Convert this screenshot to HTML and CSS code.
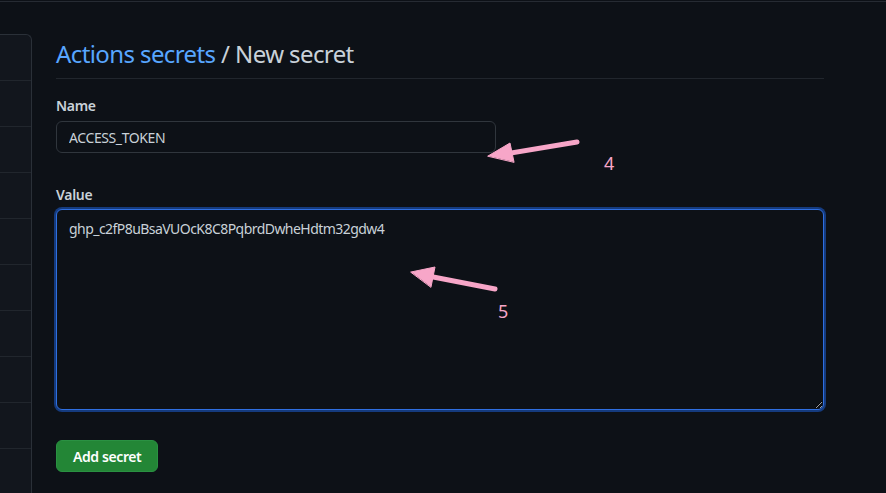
FILE: index.html
```html
<!DOCTYPE html>
<html lang="en">
<head>
<meta charset="utf-8">
<title>New secret</title>
<link rel="stylesheet" href="styles.css">
</head>
<body>
<div class="topline"></div>
<div class="layout">
  <nav class="sidebar">
    <div class="row"></div>
    <div class="row"></div>
    <div class="row"></div>
    <div class="row"></div>
    <div class="row"></div>
    <div class="row"></div>
    <div class="row"></div>
    <div class="row"></div>
    <div class="row"></div>
    <div class="row"></div>
  </nav>
  <main class="main">
    <h1 class="subhead"><a class="crumb" href="#">Actions secrets</a> / New secret</h1>
    <form class="form">
      <label class="label">Name</label>
      <input class="input" type="text" value="ACCESS_TOKEN">
      <label class="label label-value">Value</label>
      <textarea class="textarea">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</textarea>
      <button class="btn" type="button">Add secret</button>
    </form>
  </main>
</div>
<svg class="annot" width="886" height="493" viewBox="0 0 886 493">
  <g fill="#f7a6c8" stroke="#f7a6c8" stroke-linecap="round" stroke-linejoin="round">
    <line x1="577" y1="142" x2="505" y2="154" stroke-width="5"/>
    <polygon points="488,156 510,143 514,162" stroke-width="1"/>
    <line x1="495" y1="289" x2="428" y2="276" stroke-width="5"/>
    <polygon points="411,272 435,267 431,287" stroke-width="1"/>
  </g>
  <text x="604" y="170" class="num">4</text>
  <text x="498" y="318" class="num">5</text>
</svg>
</body>
</html>
```
FILE: styles.css
```css
html, body {
  margin: 0;
  padding: 0;
  background: #0d1117;
  color-scheme: dark;
}
body {
  font-family: "Noto Sans", "Liberation Sans", sans-serif;
  color: #c9d1d9;
  width: 886px;
  height: 493px;
  overflow: hidden;
  position: relative;
}
.topline {
  height: 1px;
  margin-top: 1px;
  background: #262b33;
}
.layout {
  display: flex;
  align-items: flex-start;
}
.sidebar {
  width: 31px;
  flex: none;
  margin-top: 32px;
  background: #12161d;
  border-top: 1px solid #2a3038;
  border-right: 1px solid #2a3038;
  border-top-right-radius: 6px;
}
.row {
  height: 45px;
  border-bottom: 1px solid #21262d;
}
.main {
  margin-left: 24px;
  width: 768px;
  padding-top: 34px;
}
.subhead {
  margin: 0;
  font-size: 24px;
  font-weight: 400;
  line-height: 36px;
  padding-bottom: 6px;
  border-bottom: 1px solid #21262d;
  color: #c9d1d9;
  white-space: nowrap;
  letter-spacing: -0.6px;
}
.crumb {
  color: #58a6ff;
  text-decoration: none;
}
.form {
  display: flex;
  flex-direction: column;
  align-items: flex-start;
  padding-top: 16px;
}
.label {
  font-size: 14px;
  font-weight: 600;
  line-height: 21px;
  color: #c9d1d9;
  margin-bottom: 5px;
  letter-spacing: -0.3px;
}
.label-value {
  margin-top: 31px;
  margin-bottom: 4px;
}
.input {
  box-sizing: border-box;
  width: 440px;
  height: 32px;
  padding: 0 12px;
  font-family: inherit;
  font-size: 14px;
  letter-spacing: -0.4px;
  color: #c9d1d9;
  background: #0d1117;
  border: 1px solid #30363d;
  border-radius: 6px;
  outline: none;
}
.textarea {
  box-sizing: border-box;
  width: 768px;
  height: 201px;
  padding: 9px 12px;
  font-family: inherit;
  font-size: 14px;
  line-height: 20px;
  letter-spacing: -0.55px;
  color: #c9d1d9;
  background: #0d1117;
  border: 1px solid #2f6fe0;
  border-radius: 6px;
  box-shadow: 0 0 0 2px #153b7e;
  outline: none;
  resize: both;
}
.btn {
  margin-top: 30px;
  height: 32px;
  padding: 0 16px;
  font-family: inherit;
  font-size: 14px;
  font-weight: 600;
  letter-spacing: -0.4px;
  color: #ffffff;
  background: #238636;
  border: 1px solid #2a9142;
  border-radius: 6px;
}
.annot {
  position: absolute;
  left: 0;
  top: 0;
  pointer-events: none;
}
.num {
  font-family: "Noto Sans", sans-serif;
  font-size: 18px;
  fill: #f7a6c8;
}
```
